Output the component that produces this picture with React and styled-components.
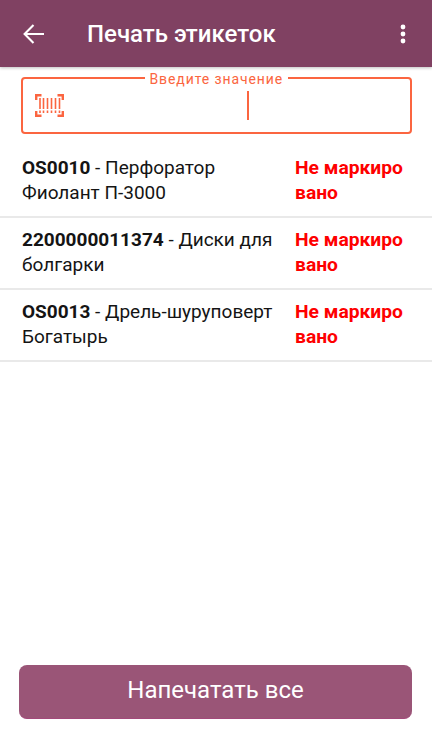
import React from 'react';
import styled, { createGlobalStyle } from 'styled-components';

const Global = createGlobalStyle`
  html, body { margin: 0; padding: 0; background: #fff; }
  #root { width: 432px; height: 739px; }
  * { box-sizing: border-box; }
`;

const Screen = styled.div`
  width: 432px;
  height: 739px;
  display: flex;
  flex-direction: column;
  font-family: Roboto, "Noto Sans", sans-serif;
  background: #fff;
  overflow: hidden;
`;

const AppBar = styled.header`
  height: 67px;
  flex: none;
  display: flex;
  align-items: center;
  background: #804162;
  color: #fff;
  padding: 0 0 0 22px;
  box-shadow: 0 1px 3px rgba(0, 0, 0, 0.25);
`;

const BackIcon = styled.svg`
  width: 24px;
  height: 24px;
  flex: none;
  display: block;
`;

const Title = styled.h1`
  margin: 0 0 0 41px;
  font-size: 24px;
  font-weight: 500;
  line-height: 28px;
  flex: 1;
`;

const MenuIcon = styled.svg`
  width: 6px;
  height: 20px;
  margin-right: 26px;
  flex: none;
  display: block;
`;

const Field = styled.div`
  position: relative;
  height: 57px;
  margin: 10px 20px 0 21px;
  border: 2px solid #fb6540;
  border-radius: 4px;
  display: flex;
  align-items: center;
  padding-left: 12px;
  flex: none;
`;

const FieldLabel = styled.span`
  position: absolute;
  top: -8.5px;
  left: 121.5px;
  padding: 0 5px;
  background: #fff;
  color: #fb6540;
  font-size: 14px;
  line-height: 16px;
  letter-spacing: 0.9px;
  white-space: nowrap;
`;

const BarcodeIcon = styled.svg`
  width: 30px;
  height: 25px;
  flex: none;
  display: block;
`;

const Caret = styled.span`
  width: 2px;
  height: 29px;
  margin-left: 182px;
  background: #fb6540;
  flex: none;
`;

const List = styled.ul`
  list-style: none;
  margin: 12px 0 0;
  padding: 0;
  flex: 1;
`;

const Row = styled.li`
  height: 72px;
  padding: 9px 16px 0 22px;
  display: flex;
  border-bottom: 2px solid #e9e9e9;
  font-size: 19px;
  line-height: 25px;
  color: #141414;
`;

const RowText = styled.div`
  width: 273px;
  flex: none;
`;

const Code = styled.b`
  font-weight: 700;
`;

const Status = styled.div`
  width: 113px;
  flex: none;
  color: #fe0000;
  font-size: 19.25px;
  font-weight: 700;
  word-break: break-all;
`;

const Footer = styled.div`
  padding: 0 20px 20px 19px;
  flex: none;
`;

const PrintButton = styled.button`
  display: block;
  width: 100%;
  height: 54px;
  border: 0;
  border-bottom: 1px solid #a3497a;
  border-radius: 8px;
  background: #9a5577;
  color: #fff;
  font-family: inherit;
  font-size: 24px;
  padding: 0 0 3px;
`;

const items = [
  { code: 'OS0010', name: 'Перфоратор Фиолант П-3000' },
  { code: '2200000011374', name: 'Диски для болгарки' },
  { code: 'OS0013', name: 'Дрель-шуруповерт Богатырь' },
];

export default function App() {
  return (
    <Screen>
      <Global />
      <AppBar>
        <BackIcon viewBox="0 0 24 24" fill="none" stroke="#fff" strokeWidth="2.1">
          <path d="M22 12H3M11.5 3L2.6 12l8.900 9" />
        </BackIcon>
        <Title>Печать этикеток</Title>
        <MenuIcon viewBox="0 0 6 20" fill="#fff">
          <circle cx="3" cy="3" r="2.4" />
          <circle cx="3" cy="10" r="2.4" />
          <circle cx="3" cy="17" r="2.4" />
        </MenuIcon>
      </AppBar>
      <Field>
        <FieldLabel>Введите значение</FieldLabel>
        <BarcodeIcon viewBox="0 0 30 25" fill="none" stroke="#fb6540">
          <path strokeWidth="2.4" d="M6.500 2.200H1.200V7M22.500 2.200H27.800V7M6.500 22.800H1.200V18M22.500 22.800H27.800V18" />
          <path strokeWidth="1.6" d="M5 5v11M8.500 5v11M12.500 5v11M16.500 5v11M20.500 5v11M24.500 5v11" />
          <path strokeWidth="1.6" d="M5 17.500v2.500M8.500 17.500v2.500M12.500 17.500v2.500M16.500 17.500v2.500M20.500 17.500v2.500M24.500 17.500v2.500" />
        </BarcodeIcon>
        <Caret />
      </Field>
      <List>
        {items.map((item) => (
          <Row key={item.code}>
            <RowText>
              <Code>{item.code}</Code> - {item.name}
            </RowText>
            <Status>Не маркировано</Status>
          </Row>
        ))}
      </List>
      <Footer>
        <PrintButton>Напечатать все</PrintButton>
      </Footer>
    </Screen>
  );
}
